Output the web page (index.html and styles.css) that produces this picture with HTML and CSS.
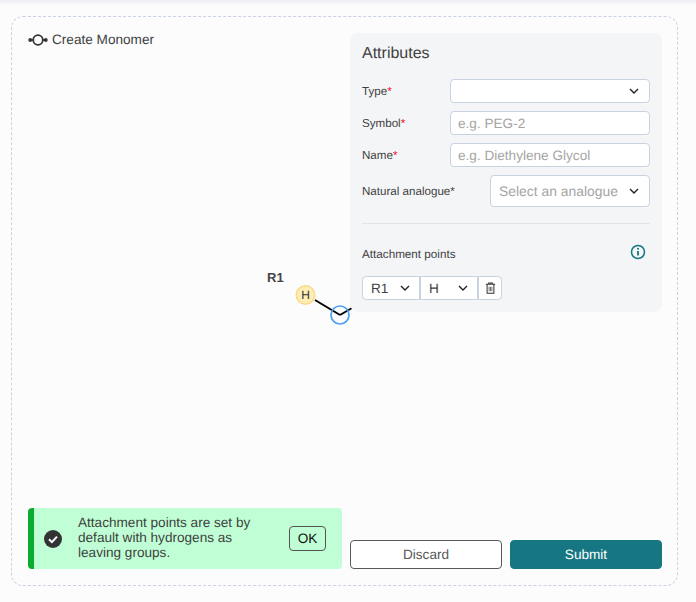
FILE: index.html
```html
<!DOCTYPE html>
<html lang="en">

<head>
  <meta charset="UTF-8" />
  <title>Create Monomer</title>
  <link rel="stylesheet" href="styles.css">
</head>

<body>
  <div class="topbar"></div>
  <div class="wizard">
    <div class="left-col">
      <div class="title">
        <svg class="title-icon" width="20" height="12" viewBox="0 0 20 12">
          <circle cx="10" cy="6" r="4.8" fill="none" stroke="#333" stroke-width="1.8" />
          <path d="M2 6h3.5M14.5 6H18" stroke="#333" stroke-width="1.5" fill="none" />
          <circle cx="2.2" cy="6" r="1.9" fill="#333" />
          <circle cx="17.8" cy="6" r="1.9" fill="#333" />
        </svg>
        <span>Create Monomer</span>
      </div>

      <div class="canvas">
        <span class="r-label">R1</span>
        <svg class="molecule" width="70" height="50" viewBox="0 0 70 50">
          <line x1="25" y1="16" x2="50" y2="31" stroke="#000" stroke-width="2" />
          <line x1="50" y1="31" x2="62" y2="24" stroke="#000" stroke-width="2" />
          <circle cx="15.5" cy="11" r="9.2" fill="#fdeeb5" stroke="#fbd98a" stroke-width="1.6" />
          <circle cx="50" cy="31" r="9" fill="none" stroke="#4c9ff5" stroke-width="1.7" />
          <text x="15.5" y="15" text-anchor="middle" class="atom">H</text>
        </svg>
      </div>

      <div class="notice">
        <svg class="notice-icon" width="18" height="18" viewBox="0 0 18 18">
          <circle cx="9" cy="9" r="9" fill="#333" />
          <path d="M5 9.3l2.9 2.8L13 6.6" fill="none" stroke="#fff" stroke-width="2" />
        </svg>
        <p class="notice-text">Attachment points are set by default with hydrogens as leaving groups.</p>
        <button class="notice-ok">OK</button>
      </div>
    </div>

    <div class="right-col">
      <div class="attributes">
        <h2>Attributes</h2>
        <div class="form-row">
          <label>Type<em>*</em></label>
          <div class="select wide">
            <span></span>
            <svg class="chevron" width="10" height="6" viewBox="0 0 10 6"><path d="M1 1l4 4 4-4" /></svg>
          </div>
        </div>
        <div class="form-row">
          <label>Symbol<em>*</em></label>
          <input class="text-input" type="text" placeholder="e.g. PEG-2" />
        </div>
        <div class="form-row">
          <label>Name<em>*</em></label>
          <input class="text-input" type="text" placeholder="e.g. Diethylene Glycol" />
        </div>
        <div class="form-row">
          <label class="small-label">Natural analogue*</label>
          <div class="select analogue">
            <span class="placeholder">Select an analogue</span>
            <svg class="chevron" width="10" height="6" viewBox="0 0 10 6"><path d="M1 1l4 4 4-4" /></svg>
          </div>
        </div>
        <hr />
        <div class="attach-head">
          <span>Attachment points</span>
          <svg width="16" height="16" viewBox="0 0 16 16">
            <circle cx="8" cy="8" r="6.5" fill="none" stroke="#167782" stroke-width="1.5" />
            <path d="M8 7v4.5" stroke="#167782" stroke-width="1.8" />
            <circle cx="8" cy="4.8" r="1" fill="#167782" />
          </svg>
        </div>
        <div class="attach-row">
          <div class="select pick pick-first">
            <span>R1</span>
            <svg class="chevron" width="10" height="6" viewBox="0 0 10 6"><path d="M1 1l4 4 4-4" /></svg>
          </div>
          <div class="select pick pick-mid">
            <span>H</span>
            <svg class="chevron" width="10" height="6" viewBox="0 0 10 6"><path d="M1 1l4 4 4-4" /></svg>
          </div>
          <button class="trash">
            <svg width="11" height="12" viewBox="0 0 12 13" fill="none" stroke="#333" stroke-width="1.1">
              <path d="M1 2.5h10M4 2.5V1h4v1.5M2.3 2.5v9.7h7.4V2.5" />
              <path d="M4.5 5v5M6 5v5M7.5 5v5" stroke="#777" />
            </svg>
          </button>
        </div>
      </div>

      <div class="actions">
        <button class="btn btn-discard">Discard</button>
        <button class="btn btn-submit">Submit</button>
      </div>
    </div>
  </div>
</body>

</html>
```

FILE: styles.css
```css
html,
body,
h2,
p {
  margin: 0;
  padding: 0;
}

body {
  position: relative;
  height: 602px;
  overflow: hidden;
  background: #fcfcfc;
  font-family: "Liberation Sans", Arial, sans-serif;
  color: #3f3f3f;
  box-sizing: border-box;
  padding: 16px 18px 16px 11px;
  text-rendering: geometricPrecision;
}

button,
input {
  text-rendering: geometricPrecision;
}

.topbar {
  position: absolute;
  top: 0;
  left: 0;
  right: 0;
  height: 5px;
  background: linear-gradient(#ecedf1, #fcfcfc);
}

.wizard {
  display: grid;
  grid-template-columns: 314px 312px;
  column-gap: 8px;
  height: 570px;
  padding: 16px;
  box-sizing: border-box;
  border: 1px dashed #c9d2e0;
  border-radius: 12px;
}

.left-col,
.right-col {
  display: flex;
  flex-direction: column;
  min-height: 0;
}

.left-col {
  position: relative;
}

.title {
  display: flex;
  align-items: center;
  gap: 4px;
  height: 14px;
  font-size: 13.6px;
  line-height: 14px;
  margin-bottom: -1px;
}

.canvas {
  flex: 1;
  position: relative;
}

.r-label {
  position: absolute;
  left: 239px;
  top: 224px;
  font-size: 13px;
  font-weight: bold;
  color: #444;
}

.molecule {
  position: absolute;
  left: 262px;
  top: 238px;
}

.atom {
  font-size: 12px;
  fill: #333;
}

.notice {
  display: flex;
  align-items: center;
  height: 61px;
  box-sizing: border-box;
  background: #c0ffd5;
  border-left: 6px solid #0aab2f;
  border-radius: 4px;
  padding: 0 16px 0 10px;
}

.notice-icon {
  flex: none;
  margin-right: 16px;
}

.notice-text {
  width: 195px;
  font-size: 13.6px;
  line-height: 15px;
  color: #3f3f3f;
  position: relative;
  top: -1px;
}

.notice-ok {
  width: 37px;
  height: 25px;
  margin-left: 16px;
  padding: 0;
  background: transparent;
  border: 1px solid #555;
  border-radius: 4px;
  font: 13.6px "Liberation Sans", Arial, sans-serif;
  color: #111;
}

.attributes {
  position: relative;
  height: 279px;
  box-sizing: border-box;
  padding: 12px 12px 0;
  background: #f4f5f7;
  border-radius: 8px;
}

.attributes h2 {
  font-size: 16px;
  font-weight: normal;
  line-height: 18px;
  margin-bottom: 16px;
}

.form-row {
  display: flex;
  align-items: center;
  justify-content: space-between;
  margin-bottom: 8px;
  font-size: 11.6px;
}

.form-row label {
  color: #3f3f3f;
}

.form-row em {
  font-style: normal;
  color: #f40724;
}

.select,
.text-input {
  box-sizing: border-box;
  background: #fff;
  border: 1px solid #c9d2e0;
  border-radius: 4px;
  font: 13.6px "Liberation Sans", Arial, sans-serif;
  color: #3f3f3f;
}

.select {
  display: flex;
  align-items: center;
  justify-content: space-between;
}

.chevron {
  flex: none;
  fill: none;
  stroke: #222;
  stroke-width: 1.4;
}

.wide,
.text-input {
  width: 200px;
  height: 24px;
}

.wide {
  padding: 0 10px 0 7px;
}

.text-input {
  padding: 0 7px;
  outline: none;
}

.text-input::placeholder,
.placeholder {
  color: #a5a5a5;
  opacity: 1;
}

.analogue {
  width: 160px;
  height: 32px;
  padding: 0 10px 0 8px;
  font-size: 13.9px;
}

.attributes hr {
  border: 0;
  border-top: 1px solid #e1e5ea;
  margin: 16px 0 0;
}

.attach-head {
  display: flex;
  align-items: center;
  justify-content: space-between;
  height: 16px;
  margin-top: 20px;
  padding-right: 4px;
  font-size: 11.7px;
}

.attach-head span {
  position: relative;
  top: 2px;
}

.attach-row {
  display: flex;
  margin-top: 16px;
}

.pick {
  width: 58px;
  height: 24px;
  padding: 0 9px 0 8px;
}

.pick-first {
  border-radius: 4px 0 0 4px;
}

.pick-mid {
  border-radius: 0;
}

.trash {
  display: flex;
  align-items: center;
  justify-content: center;
  width: 24px;
  height: 24px;
  padding: 0;
  background: #fff;
  border: 1px solid #c9d2e0;
  border-radius: 0 4px 4px 0;
}

.actions {
  display: grid;
  grid-template-columns: 152px 152px;
  column-gap: 8px;
  margin-top: auto;
}

.btn {
  height: 29px;
  padding: 0;
  border-radius: 4px;
  font: 13.6px "Liberation Sans", Arial, sans-serif;
}

.btn-discard {
  background: #fff;
  border: 1px solid #585858;
  color: #585858;
}

.btn-submit {
  background: #167782;
  border: 1px solid #167782;
  color: #fff;
}
```
